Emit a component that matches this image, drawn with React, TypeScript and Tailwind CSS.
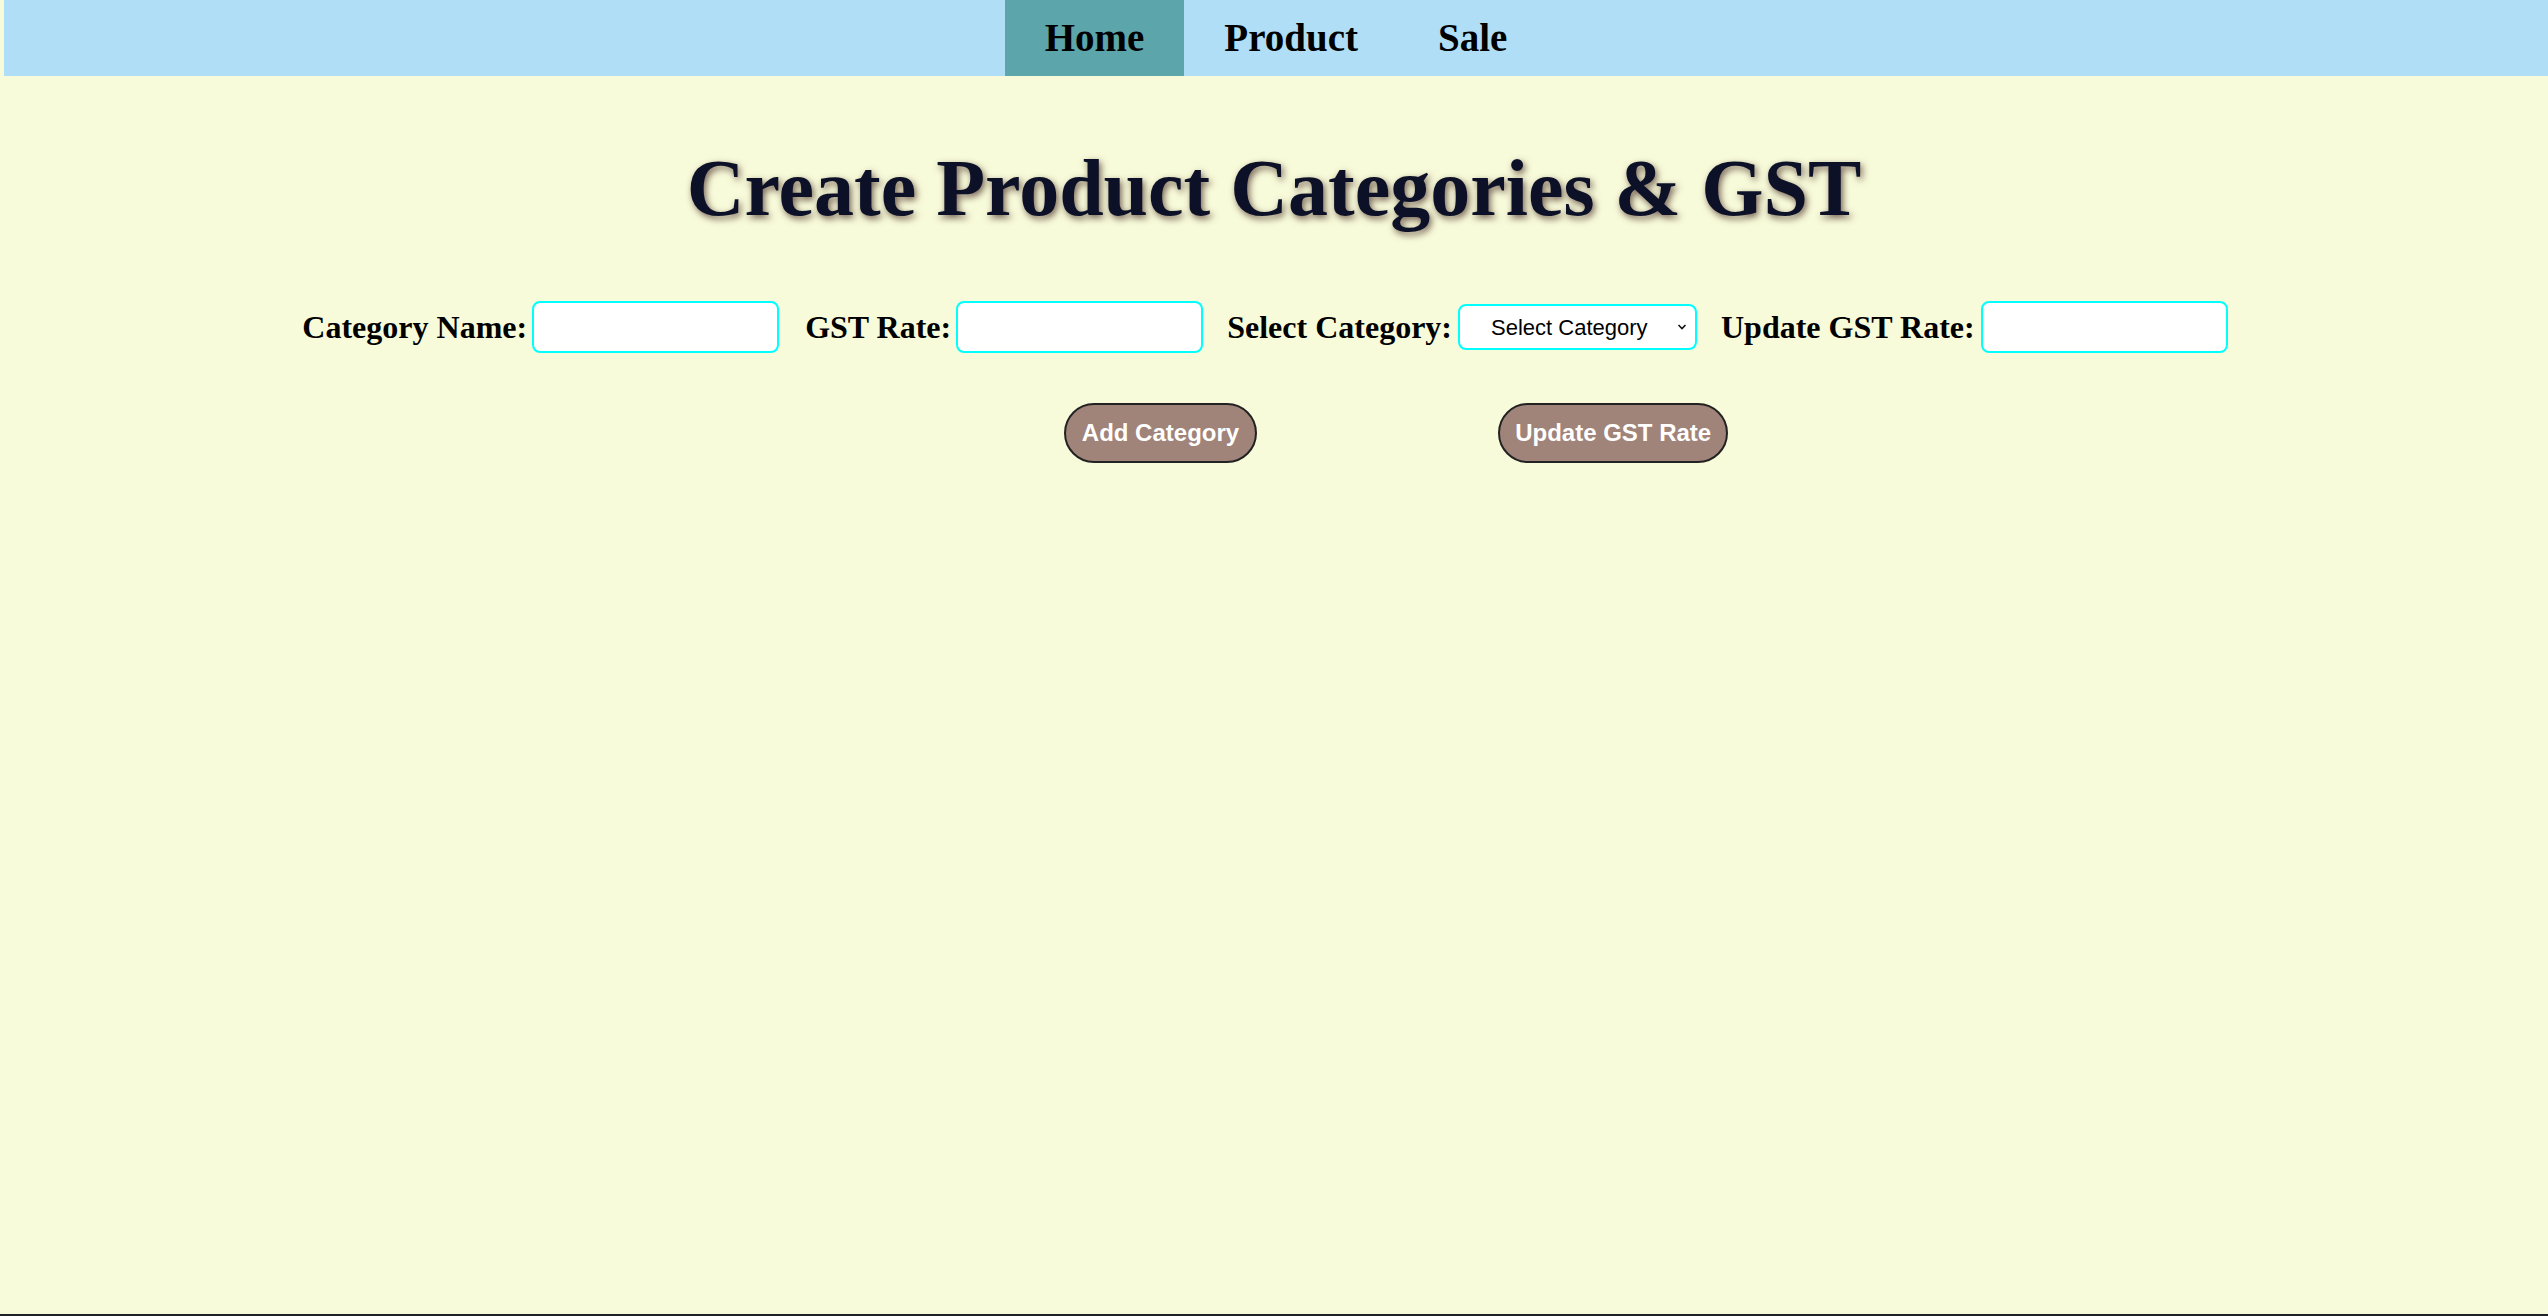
import React from "react";

export default function App() {
  return (
    <div className="min-h-screen bg-[#f8fbda] flex flex-col font-['Liberation_Serif',serif]">
      <nav className="ml-[4px] h-[76px] bg-[#b0def6] flex justify-center">
        <a className="px-[40px] flex items-center bg-[#5ca5aa] text-[39px] font-bold text-black">Home</a>
        <a className="px-[40px] flex items-center text-[39px] font-bold text-black">Product</a>
        <a className="px-[40px] flex items-center text-[39px] font-bold text-black">Sale</a>
      </nav>

      <h1 className="mt-[52px] text-center text-[80px] font-bold text-[#0d1128] [text-shadow:2px_3px_7px_rgba(60,30,25,0.7)]">
        Create Product Categories &amp; GST
      </h1>

      <div className="mt-[53px] flex justify-center items-center pr-[18px]">
        <label className="text-[32px] font-bold text-black mr-[5px]">Category Name:</label>
        <input className="w-[247px] h-[52px] bg-white border-2 border-[#00ffff] rounded-[8px] mr-[26px]" />
        <label className="text-[32px] font-bold text-black mr-[5px]">GST Rate:</label>
        <input className="w-[247px] h-[52px] bg-white border-2 border-[#00ffff] rounded-[8px] mr-[24px]" />
        <label className="text-[32px] font-bold text-black mr-[6px]">Select Category:</label>
        <div className="relative mr-[24px]">
          <select className="appearance-none w-[239px] h-[46px] bg-white border-2 border-[#00ffff] rounded-[8px] pl-[31px] text-[22px] text-black font-['Liberation_Sans',Arial,sans-serif]">
            <option>Select Category</option>
          </select>
          <svg className="absolute right-[10px] top-[19px] pointer-events-none" width="10" height="8" viewBox="0 0 10 8">
            <path d="M1.5 2 L5 5.5 L8.5 2" fill="none" stroke="#111" strokeWidth="1.6" />
          </svg>
        </div>
        <label className="text-[32px] font-bold text-black mr-[6px]">Update GST Rate:</label>
        <input className="w-[247px] h-[52px] bg-white border-2 border-[#00ffff] rounded-[8px]" />
      </div>

      <div className="mt-[50px] flex justify-center gap-[241px] pl-[244px]">
        <button className="h-[60px] px-[16px] rounded-full bg-[#a08379] border-2 border-[#222] text-white font-bold text-[24px] font-['Liberation_Sans',Arial,sans-serif]">
          Add Category
        </button>
        <button className="h-[60px] px-[15px] rounded-full bg-[#a08379] border-2 border-[#222] text-white font-bold text-[24px] font-['Liberation_Sans',Arial,sans-serif]">
          Update GST Rate
        </button>
      </div>

      <div className="flex-1" />
      <div className="h-[2px] bg-[#1c2228]" />
    </div>
  );
}
